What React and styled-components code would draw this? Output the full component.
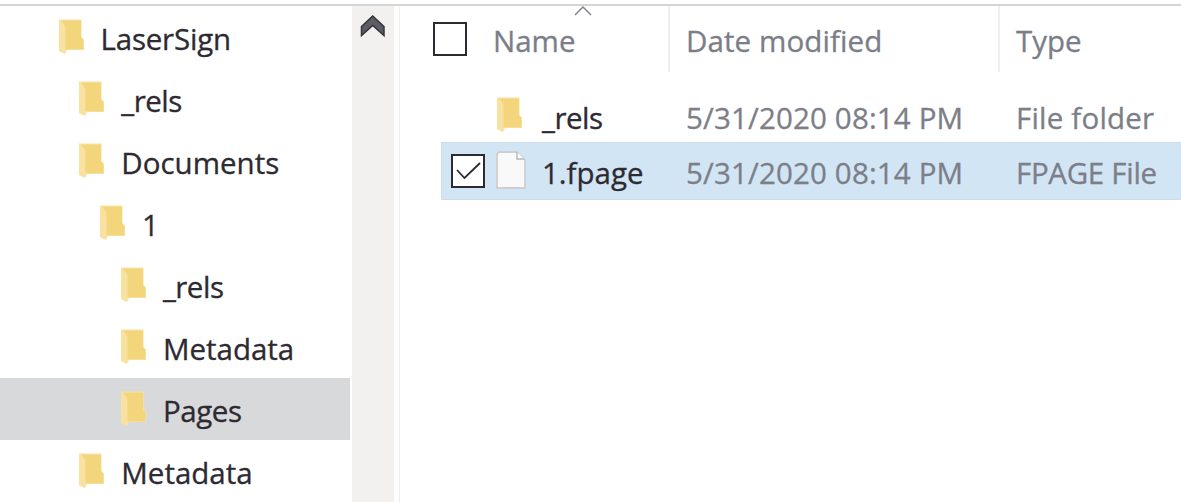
import React from "react";
import styled, { createGlobalStyle } from "styled-components";

const GlobalStyle = createGlobalStyle`
  * { box-sizing: border-box; }
  body {
    margin: 0;
    background: #fff;
    overflow: hidden;
    font-family: "Open Sans", "Noto Sans", sans-serif;
    font-size: 29.5px;
    color: #2d2a31;
  }
`;

const Window = styled.div`
  display: flex;
  flex-direction: column;
  width: 1181px;
  height: 502px;
  padding-top: 4px;
  overflow: hidden;
`;

const Rule = styled.div`
  flex: none;
  height: 2px;
  background: #d5d5d6;
`;

const Panes = styled.div`
  display: flex;
  flex: 1;
  min-height: 0;
`;

const Tree = styled.nav`
  width: 352px;
  overflow: hidden;
`;

const TreeRow = styled.div`
  display: flex;
  align-items: center;
  gap: 16px;
  width: 350px;
  height: 62px;
  padding-left: ${(p) => 57.5 + p.$level * 20.8}px;
  padding-bottom: 1px;
  background: ${(p) => (p.$selected ? "#d8d9da" : "transparent")};
`;

const Label = styled.span`
  line-height: 40px;
  padding-top: ${(p) => p.$drop ?? 3}px;
  white-space: pre;
  letter-spacing: ${(p) => p.$spacing || 0}px;
  -webkit-text-stroke: 0.3px currentColor;
`;

const ScrollBar = styled.div`
  display: flex;
  justify-content: center;
  width: 42px;
  padding-top: 9px;
  background: #f2f1f0;
`;

const Divider = styled.div`
  width: 1px;
  margin-left: 5px;
  background: #eeeeef;
`;

const List = styled.section`
  flex: 1;
  min-width: 0;
`;

const Header = styled.header`
  display: flex;
  height: 66px;
  color: #7a7e88;
`;

const HeaderCell = styled.div`
  position: relative;
  display: flex;
  align-items: center;
  width: ${(p) => p.$width}px;
  padding: 0 0 1px ${(p) => p.$pad}px;
  border-right: ${(p) => (p.$last ? "none" : "2px solid #efeff0")};
`;

const SortMark = styled.svg`
  position: absolute;
  left: 174px;
  top: 0;
`;

const CheckBox = styled.span`
  display: grid;
  place-items: center;
  flex: none;
  width: 34px;
  height: 34px;
  margin-right: ${(p) => p.$gap}px;
  border: 2px solid #2d2a31;
  background: #fff;
  visibility: ${(p) => (p.$hidden ? "hidden" : "visible")};
`;

const Rows = styled.div`
  padding-top: 16px;
  margin-left: 41px;
`;

const FileRow = styled.div`
  display: flex;
  height: ${(p) => (p.$selected ? 58 : 54)}px;
  border: 1px solid ${(p) => (p.$selected ? "#cddce8" : "transparent")};
  border-right: none;
  background: ${(p) => (p.$selected ? "#d2e5f4" : "transparent")};
`;

const FileCell = styled.div`
  display: flex;
  align-items: center;
  flex: none;
  width: ${(p) => p.$width}px;
  padding-left: ${(p) => p.$pad || 0}px;
  color: ${(p) => (p.$name ? "#2d2a31" : "#7c7e88")};
`;

const IconSlot = styled.span`
  display: flex;
  flex: none;
  width: 46px;
  margin-top: ${(p) => p.$top}px;
`;

const FolderIcon = () => (
  <svg width="27" height="36" viewBox="0 0 27 36">
    <path d="M1 0.5H23.5V18L26 20.5V31H9L7 35L1 32Z" fill="#f8e2a4" />
    <path d="M3 1.5H23V18.5L25.3 21V30.3H7V8Z" fill="#f3d57c" />
    <path d="M1.5 1.5L6 5L7.5 9V30.5L6.5 34.5L1 32Z" fill="#f9e2a1" />
  </svg>
);

const FileIcon = () => (
  <svg width="30" height="38" viewBox="0 0 30 38">
    <path d="M3 1H21L29 9V37H1V3Z" fill="#f9f9f9" stroke="#cfcfd1" strokeWidth="1.8" />
    <path d="M21 1V8H28" fill="#fff" stroke="#b4b6ba" strokeWidth="1.4" />
  </svg>
);

const TREE = [
  { name: "LaserSign", level: 0, spacing: -0.2 },
  { name: "_rels", level: 1, spacing: -0.5 },
  { name: "Documents", level: 1 },
  { name: "1", level: 2 },
  { name: "_rels", level: 3, spacing: -0.5 },
  { name: "Metadata", level: 3 },
  { name: "Pages", level: 3, selected: true, spacing: -0.4 },
  { name: "Metadata", level: 1 },
];

const FILES = [
  { name: "_rels", date: "5/31/2020 08:14 PM", type: "File folder", folder: true, typeSpacing: 0.2 },
  { name: "1.fpage", date: "5/31/2020 08:14 PM", type: "FPAGE File", selected: true, typeSpacing: -0.3 },
];

export default function App() {
  return (
    <>
      <GlobalStyle />
      <Window>
        <Rule />
        <Panes>
          <Tree>
            {TREE.map((n, i) => (
              <TreeRow key={i} $level={n.level} $selected={n.selected}>
                <FolderIcon />
                <Label $spacing={n.spacing} $drop={4}>{n.name}</Label>
              </TreeRow>
            ))}
          </Tree>
          <ScrollBar>
            <svg width="26" height="23" viewBox="0 0 26 23">
              <path d="M1.5 11.5L12.7 1L24 11.5V20.5L12.7 10.5L1.5 20.5Z" fill="#5c5c64" stroke="#35343b" strokeWidth="1.5" />
            </svg>
          </ScrollBar>
          <Divider />
          <List>
            <Header>
              <HeaderCell $width={270} $pad={33}>
                <CheckBox $gap={26} />
                <Label $drop={5}>Name</Label>
                <SortMark width="18" height="11" viewBox="0 0 18 11">
                  <path d="M1 9L9 1L17 9" fill="none" stroke="#85868d" strokeWidth="1.5" />
                </SortMark>
              </HeaderCell>
              <HeaderCell $width={330} $pad={16}>
                <Label $drop={5} $spacing={0.1}>Date modified</Label>
              </HeaderCell>
              <HeaderCell $width={180} $pad={16} $last>
                <Label $drop={5}>Type</Label>
              </HeaderCell>
            </Header>
            <Rows>
              {FILES.map((f) => (
                <FileRow key={f.name} $selected={f.selected}>
                  <FileCell $width={244} $pad={9} $name>
                    <CheckBox $gap={11} $hidden={!f.selected}>
                      <svg width="26" height="20" viewBox="0 0 26 20">
                        <path d="M2 9L9.5 17L25 2" fill="none" stroke="#2d2a31" strokeWidth="1.8" />
                      </svg>
                    </CheckBox>
                    <IconSlot $top={f.folder ? 0 : -2}>
                      {f.folder ? <FolderIcon /> : <FileIcon />}
                    </IconSlot>
                    <Label $drop={f.folder ? 5 : 3} $spacing={f.folder ? -0.5 : 0}>{f.name}</Label>
                  </FileCell>
                  <FileCell $width={330}>
                    <Label $drop={f.folder ? 5 : 3} $spacing={0.15}>{f.date}</Label>
                  </FileCell>
                  <FileCell $width={166}>
                    <Label $drop={f.folder ? 5 : 3} $spacing={f.typeSpacing}>{f.type}</Label>
                  </FileCell>
                </FileRow>
              ))}
            </Rows>
          </List>
        </Panes>
      </Window>
    </>
  );
}
